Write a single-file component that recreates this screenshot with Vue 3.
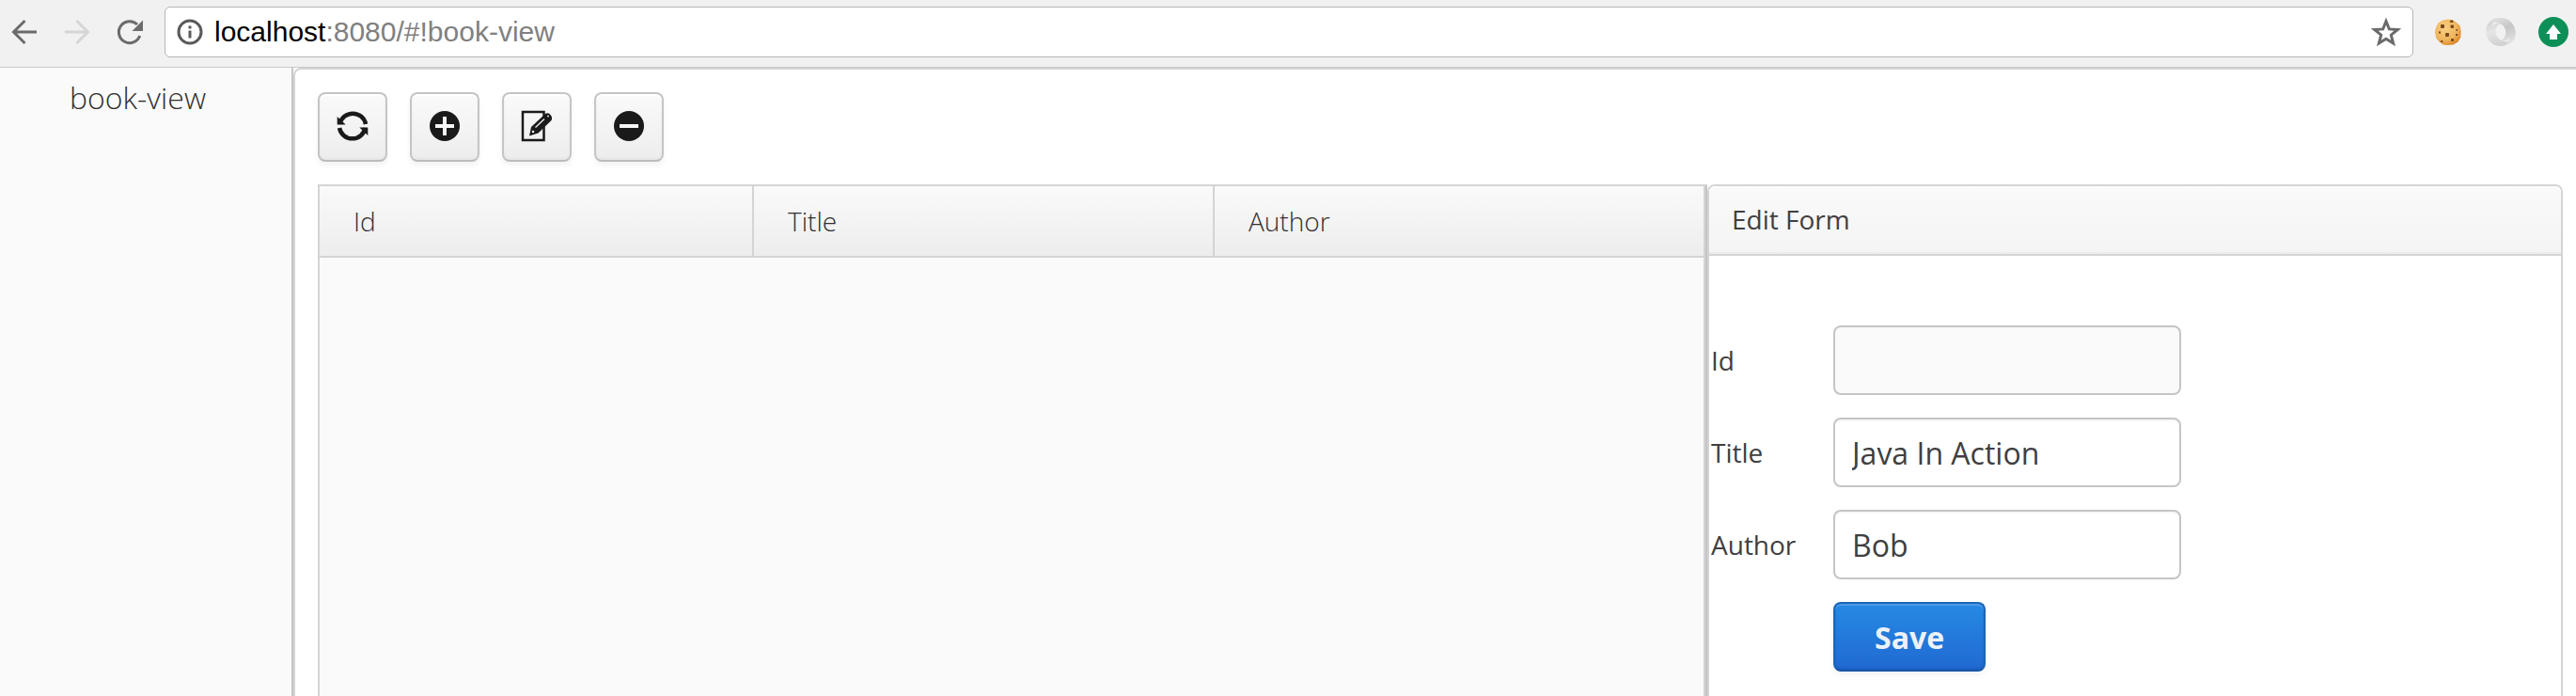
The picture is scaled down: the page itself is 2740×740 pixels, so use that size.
<script setup>
import { reactive } from 'vue'

const book = reactive({ id: '', title: 'Java In Action', author: 'Bob' })
</script>

<template>
  <div class="window">
    <header class="browser-bar">
      <nav class="nav-buttons">
        <button type="button" class="plain" aria-label="Back">
          <svg width="32" height="32" viewBox="0 0 32 32" fill="none" stroke="#6b6b6b" stroke-width="3">
            <path d="M29 16H5M16.500 4L4.500 16l12 12" />
          </svg>
        </button>
        <button type="button" class="plain" aria-label="Forward" disabled>
          <svg width="32" height="32" viewBox="0 0 32 32" fill="none" stroke="#d5d5d5" stroke-width="3">
            <path d="M3 16h24M15.500 4l12 12l-12 12" />
          </svg>
        </button>
        <button type="button" class="plain" aria-label="Reload">
          <svg width="32" height="32" viewBox="0 0 32 32">
            <path d="M26.700 20A11.500 11.500 0 1 1 24 8" fill="none" stroke="#6b6b6b" stroke-width="3" />
            <path d="M30 3.500v11.500H18.500z" fill="#6b6b6b" />
          </svg>
        </button>
      </nav>
      <div class="address">
        <svg width="28" height="28" viewBox="0 0 28 28">
          <circle cx="14" cy="14" r="12" fill="none" stroke="#5a5a5a" stroke-width="3" />
          <path d="M12.500 7.500h3v3h-3zM12.500 12.500h3v8h-3z" fill="#5a5a5a" />
        </svg>
        <p class="url"><span class="host">localhost</span>:8080/#!book-view</p>
        <button type="button" class="plain" aria-label="Bookmark">
          <svg width="32" height="32" viewBox="0 0 32 32">
            <path d="M16 4.500l3.300 8.400 9 .6-7 5.700 2.300 8.800L16 23.200 8.400 28l2.300-8.800-7-5.700 9-.6z" fill="none" stroke="#6b6b6b" stroke-width="3" />
          </svg>
        </button>
      </div>
      <div class="extensions">
        <button type="button" class="plain" aria-label="Cookies">
          <svg width="32" height="32" viewBox="0 0 32 32">
            <defs>
              <radialGradient id="cookie" cx="0.400" cy="0.350" r="0.700">
                <stop offset="0" stop-color="#f8cf86" />
                <stop offset="0.650" stop-color="#efb45c" />
                <stop offset="1" stop-color="#dc8424" />
              </radialGradient>
            </defs>
            <path d="M16 2.500l5 .8 4 2.700 3.500 3.500 1.200 6-.5 6.500-2.700 4.500-5 3-6 .5-5-.6-4-3-3.500-4.400L2 16l1-5 3-5 5-2.800z" fill="url(#cookie)" />
            <g fill="#7a4a1c">
              <rect x="8" y="8" width="4" height="4" rx="1" />
              <rect x="18" y="3.500" width="3.500" height="2.500" rx="1" />
              <rect x="18.500" y="8.500" width="3.500" height="3.500" rx="1" />
              <rect x="13" y="17" width="4" height="4" rx="1" />
              <rect x="6" y="15.500" width="2" height="2" />
              <rect x="24.500" y="13" width="1.500" height="2" />
              <rect x="24" y="18" width="2" height="2" />
              <rect x="19" y="23" width="3" height="3" rx="1" />
              <rect x="8" y="25" width="2.500" height="2" rx="1" />
            </g>
          </svg>
        </button>
        <button type="button" class="plain" aria-label="Viewer">
          <svg width="32" height="32" viewBox="0 0 32 32">
            <defs>
              <linearGradient id="ringA" x1="0" y1="0" x2="0.300" y2="1">
                <stop offset="0" stop-color="#c9c9c9" />
                <stop offset="0.500" stop-color="#e6e6e6" />
                <stop offset="1" stop-color="#d2d2d2" />
              </linearGradient>
              <linearGradient id="ringB" x1="0" y1="0" x2="0.300" y2="1">
                <stop offset="0" stop-color="#e4e4e4" />
                <stop offset="0.500" stop-color="#c6c6c6" />
                <stop offset="1" stop-color="#e2e2e2" />
              </linearGradient>
            </defs>
            <path d="M13 1C3 3-1 10 .5 18 2 26 9 32 17 31c5-.5 9-3 11-7-4 3-8 3-11 1-7-3-8-11-4-16 1-1.500 3-2 4-2-4-2-8 0-10 3 0-4 2-7 6-9z" fill="url(#ringA)" />
            <path d="M19 31c10-2 14-9 12.500-17C30 6 23 0 15 1 10 1.500 6 4 4 8c4-3 8-3 11-1 7 3 8 11 4 16-1 1.500-3 2-4 2 4 2 8 0 10-3 0 4-2 7-6 9z" fill="url(#ringB)" />
          </svg>
        </button>
        <button type="button" class="plain" aria-label="Upload">
          <svg width="32" height="32" viewBox="0 0 32 32">
            <circle cx="16" cy="16" r="16" fill="#0d9058" />
            <path d="M16 8l8 10h-4v6h-8v-6H8z" fill="#fff" />
          </svg>
        </button>
      </div>
    </header>

    <div class="workspace">
      <aside class="sidebar">
        <a href="#!book-view">book-view</a>
      </aside>

      <main class="view">
        <div class="toolbar">
          <button type="button" class="tool" aria-label="Refresh">
            <svg width="36" height="36" viewBox="0 0 36 36">
              <path d="M4.500 16A14 14 0 0 1 32 16" fill="none" stroke="#1a1a1a" stroke-width="4.500" />
              <path d="M31.500 20A14 14 0 0 1 4 20" fill="none" stroke="#1a1a1a" stroke-width="4.500" />
              <path d="M1.700 8v8.500h9zM34.300 28v-8.500h-9z" fill="#1a1a1a" />
            </svg>
          </button>
          <button type="button" class="tool" aria-label="Add">
            <svg width="36" height="36" viewBox="0 0 36 36">
              <circle cx="18" cy="18" r="16" fill="#1a1a1a" />
              <path d="M8 18h20M18 8v20" stroke="#f5f5f5" stroke-width="4" />
            </svg>
          </button>
          <button type="button" class="tool" aria-label="Edit">
            <svg width="36" height="36" viewBox="0 0 36 36">
              <path d="M3 3h22.500v30H3z" fill="none" stroke="#1a1a1a" stroke-width="2.500" />
              <path d="M10 28.500l2-9.500L26.500 5.500q3.500-2.500 6 .5t1 6L19.500 25.500z" fill="#1a1a1a" />
              <path d="M16.500 19.500L26 10.500" stroke="#f2f2f2" stroke-width="1.300" />
              <circle cx="14" cy="24" r="1.300" fill="#f2f2f2" />
              <circle cx="30" cy="7.500" r="0.900" fill="#f2f2f2" />
            </svg>
          </button>
          <button type="button" class="tool" aria-label="Delete">
            <svg width="36" height="36" viewBox="0 0 36 36">
              <circle cx="18" cy="18" r="16" fill="#1a1a1a" />
              <path d="M8 18h20" stroke="#f5f5f5" stroke-width="4" />
            </svg>
          </button>
        </div>

        <div class="split">
          <section class="grid-pane">
            <table class="grid">
              <colgroup>
                <col class="col-id" />
                <col class="col-title" />
                <col />
              </colgroup>
              <thead>
                <tr>
                  <th scope="col">Id</th>
                  <th scope="col">Title</th>
                  <th scope="col">Author</th>
                </tr>
              </thead>
            </table>
          </section>
          <section class="panel">
            <h2 class="caption">Edit Form</h2>
            <form class="form" @submit.prevent>
              <label for="book-id">Id</label>
              <input id="book-id" v-model="book.id" type="text" disabled />
              <label for="book-title">Title</label>
              <input id="book-title" v-model="book.title" type="text" />
              <label for="book-author">Author</label>
              <input id="book-author" v-model="book.author" type="text" />
              <button type="submit" class="save">Save</button>
            </form>
          </section>
        </div>
      </main>
    </div>
  </div>
</template>

<style>
body {
  margin: 0;
}
</style>

<style scoped>
.window {
  display: flex;
  flex-direction: column;
  min-height: 100vh;
  background: #fff;
  color: #404040;
  font-family: "Open Sans", "Noto Sans", sans-serif;
  font-size: 32px;
}

.window *,
.window {
  box-sizing: border-box;
}

svg {
  display: block;
  flex: none;
}

.plain {
  padding: 0;
  border: 0;
  background: none;
}

.browser-bar {
  display: flex;
  align-items: center;
  height: 72px;
  padding: 0 8px 3px 10px;
  border-bottom: 1px solid #c8c8c8;
  background: #f1f1f1;
}

.nav-buttons {
  display: flex;
  gap: 24px;
  margin-right: 21px;
}

.address {
  display: flex;
  flex: 1;
  align-items: center;
  height: 54px;
  padding: 0 12px;
  border: 1px solid #b6b6b6;
  border-radius: 6px;
  background: #fff;
}

.url {
  flex: 1;
  margin: 0 0 0 12px;
  color: #808080;
  font-family: "Liberation Sans", Arial, sans-serif;
  font-size: 30px;
  line-height: 40px;
}

.host {
  color: #000;
}

.extensions {
  display: flex;
  gap: 24px;
  margin-left: 21px;
}

.workspace {
  display: flex;
  flex: 1;
}

.sidebar {
  flex: 0 0 312px;
  padding: 10px 24px 0 74px;
  border-right: 2px solid #c5c5c5;
  background: #fafafa;
}

.sidebar a {
  color: #303030;
  font-weight: 300;
  line-height: 44px;
  text-decoration: none;
}

.view {
  display: flex;
  flex: 1;
  flex-direction: column;
  min-width: 0;
  padding: 24px 14px 0 24px;
  border-top: 2px solid #d4d4d4;
  border-left: 2px solid #d4d4d4;
  border-top-left-radius: 8px;
}

.toolbar {
  display: flex;
  gap: 24px;
  margin-bottom: 24px;
}

.tool {
  display: flex;
  align-items: center;
  justify-content: center;
  width: 74px;
  height: 74px;
  padding: 0 0 2px;
  border: 2px solid #c5c5c5;
  border-bottom-color: #bcbcbc;
  border-radius: 8px;
  background: linear-gradient(#fafafa, #ededed);
  box-shadow: inset 0 2px 0 #fff, inset 0 -2px 2px #e6e6e6, 0 4px 6px rgba(0, 0, 0, 0.05);
}

.split {
  display: flex;
  flex: 1;
}

.grid-pane {
  flex: 1474 1 0;
  border-top: 2px solid #d4d4d4;
  border-right: 2px solid #c5c5c5;
  border-left: 2px solid #d4d4d4;
  background: #fafafa;
  box-shadow: inset -2px 0 0 #d4d4d4;
}

.grid {
  width: 100%;
  padding-right: 2px;
  border-spacing: 0;
  table-layout: fixed;
}

.col-id {
  width: 462px;
}

.col-title {
  width: 490px;
}

.grid th {
  height: 76px;
  padding: 0 36px;
  border-right: 2px solid #d4d4d4;
  border-bottom: 2px solid #d4d4d4;
  background: linear-gradient(#fafafa, #ededed);
  color: #303030;
  font-size: 28px;
  font-weight: 300;
  line-height: 38px;
  text-align: left;
}

.grid th:last-child {
  border-right: 0;
}

.panel {
  flex: 906 1 0;
  border: 2px solid #d4d4d4;
  border-bottom: 0;
  border-radius: 8px 8px 0 0;
}

.caption {
  height: 74px;
  margin: 0;
  padding: 0 24px;
  border-bottom: 2px solid #d4d4d4;
  border-radius: 6px 6px 0 0;
  background: linear-gradient(#fafafa, #f4f4f4);
  box-shadow: inset 0 2px 0 #fff, inset 0 -2px 0 #ededed;
  font-size: 28px;
  font-weight: 400;
  line-height: 70px;
}

.form {
  display: grid;
  grid-template-columns: 130px minmax(0, 370px);
  gap: 24px 0;
  align-items: center;
  padding: 74px 2px 24px;
}

.form label {
  font-size: 28px;
  line-height: 38px;
}

.form input {
  width: 100%;
  height: 74px;
  padding: 0 18px;
  border: 2px solid #c5c5c5;
  border-radius: 8px;
  background: #fff;
  box-shadow: inset 0 2px 0 #f7f7f7;
  color: #404040;
  font: inherit;
}

.form input:disabled {
  background: #fafafa;
  box-shadow: none;
}

.save {
  grid-column: 2;
  justify-self: start;
  height: 74px;
  padding: 0 42px;
  border: 2px solid #1b66b6;
  border-bottom-color: #1756a5;
  border-radius: 8px;
  background: linear-gradient(#268ae3, #2069d2);
  box-shadow: inset 0 2px 0 #4d9ce8, inset 0 -2px 2px #1c5fc0, 0 4px 6px rgba(0, 0, 0, 0.05);
  color: #ecf2f8;
  font: inherit;
  font-weight: 700;
}
</style>
